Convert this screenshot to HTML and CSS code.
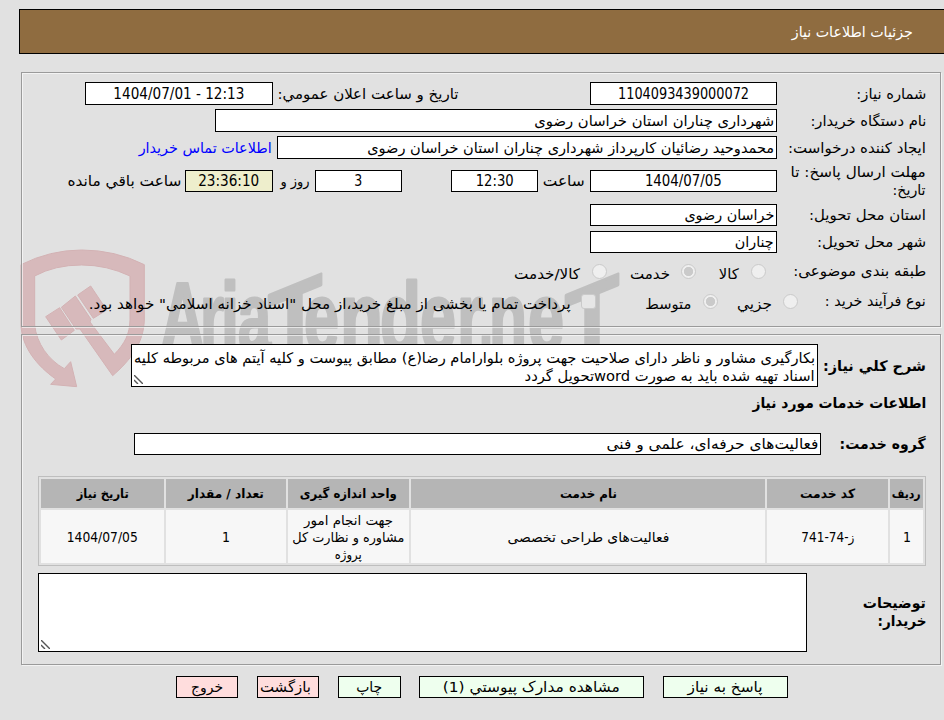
FILE: index.html
```html
<!DOCTYPE html>
<html lang="fa" dir="rtl">
<head>
<meta charset="utf-8">
<title>جزئیات اطلاعات نیاز</title>
<link rel="stylesheet" href="styles.css">
</head>
<body>
<header class="titlebar"><span class="fit" data-w="121">جزئیات اطلاعات نیاز</span></header>

<svg class="watermark" viewBox="0 230 640 170" width="640" height="170" direction="ltr">
  <g class="shield" transform="translate(0 230) scale(.33333)">
    <path d="M63 104Q150 60 245 60Q345 60 433 104V270C431 340 390 392 338 437L240 297L228 297L184 232L226 198L273 268L270 276L343 373C375 340 389 312 390 270V138Q320 105 245 105Q165 105 104 138V285C110 340 145 390 193 416L212 395L230 470L152 463L167 447C110 407 65 350 63 285Z"/>
    <path d="M137 260L179 233L223 301L184 330ZM233 195L272 168L320 240L280 265Z"/>
  </g>
  <g class="brand">
    <text x="160" y="351" textLength="45" lengthAdjust="spacingAndGlyphs">A</text>
    <text x="200" y="351" textLength="24" lengthAdjust="spacingAndGlyphs">r</text>
    <text x="221" y="351" textLength="18" lengthAdjust="spacingAndGlyphs">i</text>
    <text x="238" y="351" textLength="33" lengthAdjust="spacingAndGlyphs">a</text>
    <text transform="translate(268 363) skewY(-22)" textLength="54" lengthAdjust="spacingAndGlyphs">T</text>
    <text x="304" y="351" textLength="35" lengthAdjust="spacingAndGlyphs">e</text>
    <text x="340" y="351" textLength="43" lengthAdjust="spacingAndGlyphs">n</text>
    <text x="380" y="351" textLength="41" lengthAdjust="spacingAndGlyphs">d</text>
    <text x="420" y="351" textLength="36" lengthAdjust="spacingAndGlyphs">e</text>
    <text x="457" y="351" textLength="26" lengthAdjust="spacingAndGlyphs">r</text>
    <text x="479" y="351" textLength="14" lengthAdjust="spacingAndGlyphs">.</text>
    <text x="489" y="351" textLength="38" lengthAdjust="spacingAndGlyphs">n</text>
    <text x="528" y="351" textLength="36" lengthAdjust="spacingAndGlyphs">e</text>
    <text transform="translate(565 363) skewY(-22)" textLength="54" lengthAdjust="spacingAndGlyphs">T</text>
  </g>
</svg>

<main>
<section class="panel details">
  <div class="row r1">
    <label><span class="fit" data-w="70">شماره نیاز:</span></label>
    <div class="box mid"><span class="fit" data-w="131">1104093439000072</span></div>
    <i></i>
    <label><span class="fit" data-w="181">تاریخ و ساعت اعلان عمومي:</span></label>
    <i></i>
    <div class="box mid"><bdo dir="ltr" class="fit" data-w="131">1404/07/01 - 12:13</bdo></div>
  </div>
  <div class="row r2">
    <label><span class="fit" data-w="116">نام دستگاه خریدار:</span></label>
    <div class="box"><span class="fit" data-w="240">شهرداری چناران استان خراسان رضوی</span></div>
  </div>
  <div class="row r3">
    <label><span class="fit" data-w="138">ایجاد کننده درخواست:</span></label>
    <div class="box"><span class="fit" data-w="407">محمدوحید رضائیان کارپرداز شهرداری چناران استان خراسان رضوی</span></div>
    <i></i>
    <a><span class="fit" data-w="133">اطلاعات تماس خریدار</span></a>
  </div>
  <div class="row r4">
    <label class="two"><span class="fit" data-w="135">مهلت ارسال پاسخ: تا</span><span class="fit" data-w="33">تاریخ:</span></label>
    <div class="box mid"><span class="fit" data-w="77">1404/07/05</span></div>
    <i></i>
    <label><span class="fit" data-w="42">ساعت</span></label>
    <i></i>
    <div class="box mid"><span class="fit" data-w="38">12:30</span></div>
    <i></i>
    <div class="box mid"><span class="fit" data-w="8">3</span></div>
    <i></i>
    <label><span class="fit" data-w="29">روز و</span></label>
    <i></i>
    <div class="box mid timer"><span class="fit" data-w="61">23:36:10</span></div>
    <i></i>
    <label><span class="fit" data-w="114">ساعت باقي مانده</span></label>
  </div>
  <div class="row r5">
    <label><span class="fit" data-w="117">استان محل تحویل:</span></label>
    <div class="box"><span class="fit" data-w="90">خراسان رضوی</span></div>
  </div>
  <div class="row r6">
    <label><span class="fit" data-w="109">شهر محل تحویل:</span></label>
    <div class="box"><span class="fit" data-w="39">چناران</span></div>
  </div>
  <div class="row r7">
    <label><span class="fit" data-w="133">طبقه بندی موضوعی:</span></label>
    <b class="radio"></b><i></i>
    <label class="low"><span class="fit" data-w="20">کالا</span></label>
    <i></i><b class="radio on"></b><i></i>
    <label class="low"><span class="fit" data-w="40">خدمت</span></label>
    <i></i><b class="radio"></b><i></i>
    <label class="low"><span class="fit" data-w="66">کالا/خدمت</span></label>
  </div>
  <div class="row r8">
    <label><span class="fit" data-w="101">نوع فرآیند خرید :</span></label>
    <b class="radio"></b><i></i>
    <label class="low"><span class="fit" data-w="35">جزیي</span></label>
    <i></i><b class="radio on"></b><i></i>
    <label class="low"><span class="fit" data-w="46">متوسط</span></label>
    <i></i><b class="check"></b><i></i>
    <label class="low"><span class="fit" data-w="482">پرداخت تمام یا بخشی از مبلغ خرید،از محل "اسناد خزانه اسلامی" خواهد بود.</span></label>
  </div>
</section>

<section class="panel needs">
  <div class="row summary">
    <label class="strong"><span class="fit" data-w="103">شرح کلي نیاز:</span></label>
    <div class="area">
      <span class="fit" data-w="681">بکارگیری مشاور و ناظر دارای صلاحیت جهت پروژه بلوارامام رضا(ع) مطابق پیوست و کلیه آیتم های مربوطه کلیه</span>
      <span class="fit" data-w="290">اسناد تهیه شده باید به صورت wordتحویل گردد</span>
      <svg class="grip" width="9" height="9" viewBox="0 0 9 9"><path d="M0 0L9 9M0 5L4 9"/></svg>
    </div>
  </div>
  <h2 class="strong"><span class="fit" data-w="174">اطلاعات خدمات مورد نیاز</span></h2>
  <div class="row group">
    <label class="strong"><span class="fit" data-w="86">گروه خدمت:</span></label>
    <div class="box"><span class="fit" data-w="212">فعالیت‌های حرفه‌ای، علمی و فنی</span></div>
  </div>
  <div class="grid">
    <div class="th"><span class="fit" data-w="29">ردیف</span></div>
    <div class="th"><span class="fit" data-w="55">کد خدمت</span></div>
    <div class="th"><span class="fit" data-w="57">نام خدمت</span></div>
    <div class="th"><span class="fit" data-w="97">واحد اندازه گیری</span></div>
    <div class="th"><span class="fit" data-w="76">تعداد / مقدار</span></div>
    <div class="th"><span class="fit" data-w="52">تاریخ نیاز</span></div>
    <div class="td"><span class="fit" data-w="8">1</span></div>
    <div class="td"><span class="fit" data-w="53">ز-74-741</span></div>
    <div class="td"><span class="fit" data-w="162">فعالیت‌های طراحی تخصصی</span></div>
    <div class="td"><span class="fit" data-w="89">جهت انجام امور</span><span class="fit" data-w="112">مشاوره و نظارت کل</span><span class="fit" data-w="27">پروژه</span></div>
    <div class="td"><span class="fit" data-w="8">1</span></div>
    <div class="td"><span class="fit" data-w="71">1404/07/05</span></div>
  </div>
  <div class="row notes">
    <label class="strong two"><span class="fit" data-w="63">توضیحات</span><span class="fit" data-w="49">خریدار:</span></label>
    <div class="area"><svg class="grip" width="9" height="9" viewBox="0 0 9 9"><path d="M0 0L9 9M0 5L4 9"/></svg></div>
  </div>
</section>

<nav class="actions">
  <div class="btn ok"><span class="fit" data-w="75">پاسخ به نیاز</span></div>
  <div class="btn ok"><span class="fit" data-w="177">مشاهده مدارک پیوستي (1)</span></div>
  <div class="btn ok"><span class="fit" data-w="26">چاپ</span></div>
  <div class="btn no back"><span class="fit" data-w="51">بازگشت</span></div>
  <div class="btn no"><span class="fit" data-w="32">خروج</span></div>
</nav>
</main>
<script src="fit.js"></script>
</body>
</html>
```
FILE: fit.js
```js
document.querySelectorAll('.fit').forEach(function (el) {
  var w = el.getBoundingClientRect().width;
  el.style.transform = 'scaleX(' + (Number(el.dataset.w) / w) + ')';
});
```
FILE: styles.css
```css
* { box-sizing: border-box; }
html { overflow: hidden; }
body {
  margin: 0;
  width: 944px;
  height: 720px;
  overflow: hidden;
  position: relative;
  background: #e1e1e1;
  color: #000;
  font: 14.6px/18px "DejaVu Sans Condensed", "DejaVu Sans", sans-serif;
}
i { font-style: normal; }
.fit {
  display: inline-block;
  flex: none;
  white-space: nowrap;
  transform-origin: right center;
}
.titlebar {
  height: 45px;
  margin: 9px 0 0 19px;
  padding-right: 31px;
  display: flex;
  align-items: center;
  background: #8f6c40;
  border: 1px solid #000;
  border-right: 0;
  color: #fff;
}
main { position: relative; }
.watermark { position: absolute; left: 0; top: 230px; }
.shield { fill: #d7b9bb; stroke: #d3b2b4; stroke-width: 3; }
.brand {
  fill: #bfbfbf;
  stroke: #bfbfbf;
  stroke-width: 3;
  stroke-linejoin: round;
  font-family: "Liberation Sans", sans-serif;
  font-size: 98px;
  font-weight: bold;
  direction: ltr;
}
.panel {
  width: 920px;
  margin-left: 21px;
  margin-right: 3px;
  border: 1px solid #9a9a9a;
  box-shadow: 1px 1px rgba(255, 255, 255, .6), inset 1px 1px rgba(255, 255, 255, .6);
}
.details { height: 255px; margin-top: 18px; padding: 9px 14px 0 0; }
.needs { height: 331px; margin-top: 7px; padding: 9px 14px 0 16px; }
.row { display: grid; align-items: center; height: 23px; margin-bottom: 4px; grid-template-rows: 100%; }
label, a { display: flex; white-space: nowrap; min-width: 0; }
a { color: #00f; }
.two { flex-direction: column; align-items: flex-start; }
.low { position: relative; top: 3px; }
.box {
  height: 100%;
  display: flex;
  align-items: center;
  padding: 0 2px;
  background: #fff;
  border: 1px solid #000;
}
.mid { justify-content: center; font-size: 15.2px; }
.mid .fit, .grid .fit, .btn .fit { transform-origin: center; }
.timer { background: #eeeecc; }
.r1 { grid-template-columns: 149px 187px 132px 180px 5px 188px; }
.r2 { grid-template-columns: 149px 562px; }
.r3 { grid-template-columns: 149px 500px 5px 132px; }
.r4 {
  grid-template-columns: 149px 187px 5px 42px 5px 87px 49px 87px 5px 29px 8px 88px 4px 113px;
  height: 22px;
  margin: 11px 0 12px;
}
.r4 .two { margin: -8px 0; }
.r5, .r6 { grid-template-columns: 149px 187px; height: 22px; margin-bottom: 5px; }
.r7 {
  grid-template-columns: 160px 15px 12px 20px 23px 15px 11px 40px 23px 15px 12px 66px;
  height: 26px;
  margin: 5px 0 4px;
}
.r8 { grid-template-columns: 128px 15px 11px 35px 19px 15px 12px 45px 50px 15px 10px 481px; height: 26px; }
.radio {
  width: 15px;
  height: 15px;
  border: 1px solid #cacaca;
  border-radius: 50%;
  background: #efefef;
}
.on { background: radial-gradient(circle, #cacaca 0 4.3px, #efefef 5px); }
.check {
  width: 15px;
  height: 15px;
  border: 1px solid #cacaca;
  border-radius: 3px;
  background: #e6e6e6;
}
.strong { font-weight: bold; }
.summary { grid-template-columns: 108px 687px; height: 43px; }
.area {
  height: 100%;
  position: relative;
  display: flex;
  flex-direction: column;
  align-items: flex-start;
  padding: 4px 2px 0;
  background: #fff;
  border: 1px solid #000;
}
.grip { position: absolute; left: 2px; bottom: 2px; fill: none; stroke: #555; stroke-width: 1.4; }
h2 { font-size: inherit; margin: 7px 0 0; height: 18px; display: flex; }
.group { grid-template-columns: 105px 687px; height: 22px; margin: 21px 0; }
.grid {
  display: grid;
  grid-template-columns: 33px 121px 354px 121px 120px 123px;
  grid-template-rows: 29px 53px;
  column-gap: 2px;
  row-gap: 2px;
  padding: 2px;
  border: 1px solid #bebebe;
}
.th, .td {
  display: flex;
  flex-direction: column;
  align-items: center;
  justify-content: center;
  min-width: 0;
  line-height: 17px;
}
.th { background: #b5b5b5; font-weight: bold; font-size: 12.7px; }
.td { background: #f7f7f7; font-size: 13.6px; padding-top: 1px; }
.notes { grid-template-columns: 119px 769px; height: 79px; margin-top: 7px; }
.notes .two { margin-top: -2px; }
.actions { display: flex; gap: 19px; margin-top: 11px; padding-right: 156px; }
.btn {
  height: 22px;
  display: flex;
  align-items: center;
  justify-content: center;
  border: 1px solid #000;
  flex: none;
  width: 62px;
}
.btn:nth-child(1) { width: 125px; }
.btn:nth-child(2) { width: 225px; }
.btn:nth-child(3) { width: 63px; margin-right: -1px; }
.ok { background: #eeffee; }
.no { background: #ffdddd; }
.back { padding-left: 6px; }
.back .fit { position: relative; left: -6px; }
```
